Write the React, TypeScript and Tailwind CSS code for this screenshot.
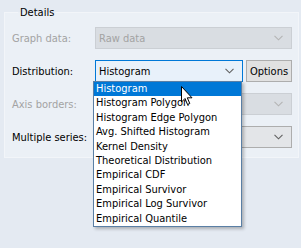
import React from "react";

const items = [
  "Histogram",
  "Histogram Polygon",
  "Histogram Edge Polygon",
  "Avg. Shifted Histogram",
  "Kernel Density",
  "Theoretical Distribution",
  "Empirical CDF",
  "Empirical Survivor",
  "Empirical Log Survivor",
  "Empirical Quantile",
];

function Chevron({ color }: { color: string }) {
  return (
    <svg width="9" height="6" viewBox="0 0 9 6" className="shrink-0">
      <path d="M0.5 0.8 L4.5 4.8 L8.5 0.8" fill="none" stroke={color} strokeWidth="1.1" />
    </svg>
  );
}

function Combo({
  value,
  disabled,
  className,
}: {
  value: string;
  disabled?: boolean;
  className: string;
}) {
  return (
    <div
      className={`flex items-center justify-between h-[22px] pl-[3px] pr-[8px] border ${className}`}
    >
      <span className={disabled ? "text-[#a3a3a3]" : "text-black"}>{value}</span>
      <Chevron color={disabled ? "#b4b4b4" : "#606060"} />
    </div>
  );
}

export default function App() {
  return (
    <div
      className="relative w-[301px] h-[248px] bg-[#e4eaf2] pt-[6px] pl-[4px] text-[11px] leading-[13px] overflow-hidden"
      style={{ fontFamily: "Tahoma, 'DejaVu Sans Condensed', 'Liberation Sans', sans-serif" }}
    >
      <fieldset className="w-[294px] h-[152px] border border-[#f2f5f9] bg-[#ebf0f6] pl-[7px] pr-[6px]">
        <legend className="ml-[6px] px-[2px] text-black">Details</legend>

        <div className="flex flex-col gap-[11px] pt-[8px]">
          <div className="flex items-center">
            <span className="w-[83px] text-[#a3a3a3]">Graph data:</span>
            <Combo value="Raw data" disabled className="w-[197px] bg-[#d9dde2] border-[#cbcfd4]" />
          </div>

          <div className="flex items-center">
            <span className="w-[83px] text-black">Distribution:</span>
            <Combo value="Histogram" className="w-[148px] bg-[#e8f1fa] border-[#0078d7]" />
            <button className="ml-[3px] w-[46px] h-[22px] bg-[#e1e1e1] border border-[#adadad] text-black">
              Options
            </button>
          </div>

          <div className="flex items-center">
            <span className="w-[83px] text-[#a3a3a3]">Axis borders:</span>
            <Combo value="" disabled className="w-[197px] bg-[#d9dde2] border-[#cbcfd4]" />
          </div>

          <div className="flex items-center">
            <span className="w-[83px] text-black">Multiple series:</span>
            <Combo value="" className="w-[197px] bg-[#e3e5e8] border-[#adadad]" />
          </div>
        </div>
      </fieldset>

      {/* open dropdown list */}
      <div className="absolute left-[93px] top-[81px] w-[149px] bg-white border border-[#5a7fa5] shadow-[2px_2px_3px_rgba(0,0,0,0.25)]">
        {items.map((it, i) => (
          <div
            key={it}
            className={`h-[14.4px] leading-[14.4px] pl-[2px] whitespace-nowrap ${
              i === 0 ? "bg-[#0078d7] text-white" : "text-black"
            }`}
          >
            {it}
          </div>
        ))}
      </div>

      {/* mouse pointer */}
      <svg
        className="absolute left-[181px] top-[86px]"
        width="13"
        height="20"
        viewBox="0 0 13 20"
      >
        <path
          d="M0.5 0.5 L0.5 16 L4 12.5 L6.5 18.5 L8.8 17.5 L6.3 11.8 L11 11.8 Z"
          fill="white"
          stroke="black"
          strokeWidth="1"
          strokeLinejoin="miter"
        />
      </svg>
    </div>
  );
}
